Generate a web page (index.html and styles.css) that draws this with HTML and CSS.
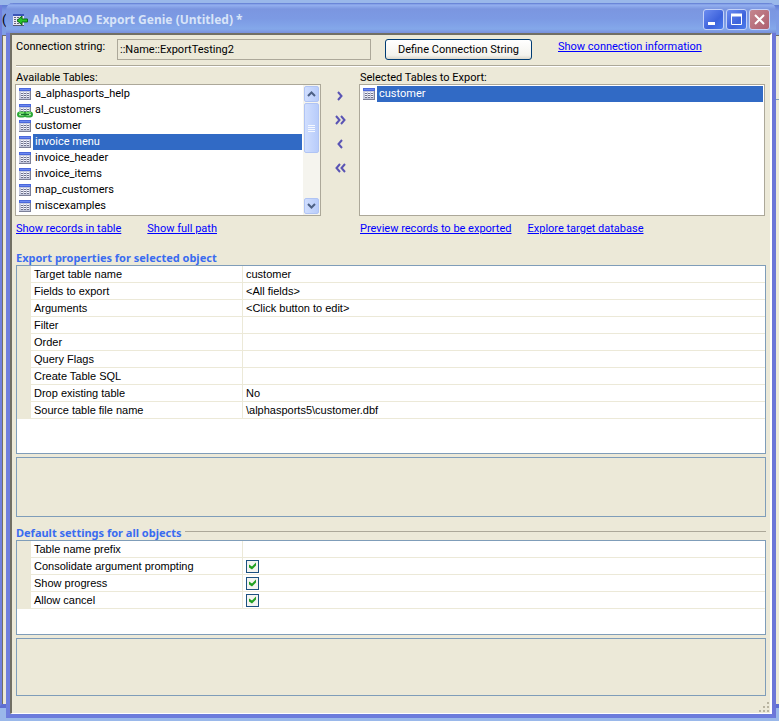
FILE: index.html
```html
<!DOCTYPE html>
<html lang="en">
<head>
  <meta charset="UTF-8">
  <meta name="viewport" content="width=device-width, initial-scale=1.0">
  <title>AlphaDAO Export Genie</title>
  <link rel="stylesheet" href="styles.css">
</head>
<body>

  <!-- shared icons -->
  <svg class="sprite" aria-hidden="true">
    <symbol id="icon-table" viewBox="0 0 12 12">
      <rect width="12" height="12" fill="#7c8098"/>
      <rect width="11" height="11" fill="#c4c8dc"/>
      <rect width="12" height="3" fill="#4a68dc"/>
      <rect x="1" y="1" width="10" height="1" fill="#6c88f0"/>
      <path d="M2 4.500h2M5 4.500h2M8 4.500h2M2 6.500h2M5 6.500h2M8 6.500h2M2 8.500h2M5 8.500h2M8 8.500h2" stroke="#f4f4fc"/>
      <path d="M2 5.500h2M5 5.500h2M8 5.500h2M2 7.500h2M5 7.500h2M8 7.500h2M2 9.500h2M5 9.500h2M8 9.500h2" stroke="#70748c"/>
    </symbol>
    <symbol id="icon-link" viewBox="0 0 16 7">
      <rect x="1" y="1.500" width="7" height="4" rx="2" fill="#b8f0b0" stroke="#2ca838" stroke-width="2"/>
      <rect x="8" y="1.500" width="7" height="4" rx="2" fill="#b8f0b0" stroke="#2ca838" stroke-width="2"/>
      <path d="M2 1.500h5M9 1.500h5" stroke="#6ce060"/>
      <path d="M4 3.500h8" stroke="#14702a"/>
    </symbol>
    <symbol id="icon-chevron" viewBox="0 0 6 10">
      <path d="M1 1l3.500 4L1 9" fill="none" stroke="#5a54b4" stroke-width="2"/>
    </symbol>
  </svg>

  <!-- window behind -->
  <div class="back-window">
    <div class="back-title"><span>(</span></div>
    <div class="back-body"></div>
  </div>

  <main class="window">
    <header class="titlebar">
      <svg class="app-icon" viewBox="0 0 16 14" aria-hidden="true">
        <rect x="1" y="1" width="11" height="11" fill="#e8e8f4"/>
        <rect x="1" y="1" width="11" height="2" fill="#3d55b8"/>
        <path d="M2 4.500h9M2 6.500h9M2 8.500h9M2 10.500h9" stroke="#686880" stroke-dasharray="2 1"/>
        <path d="M1 12.500h11" stroke="#555a70"/>
        <path d="M5 7.500l5-4.500v3h5.500v3h-5.500v3z" fill="#24c424" stroke="#0c6818"/>
      </svg>
      <h1>AlphaDAO Export Genie (Untitled) *</h1>
      <div class="window-buttons">
        <button type="button" aria-label="Minimize">
          <svg viewBox="0 0 19 19"><path d="M4 13.500h7" stroke="#fff" stroke-width="3"/></svg>
        </button>
        <button type="button" aria-label="Maximize">
          <svg viewBox="0 0 19 19"><path d="M4.500 5v9.500h10V5M4 5.500h11" fill="none" stroke="#fff"/><path d="M4 5h11" stroke="#fff" stroke-width="3"/></svg>
        </button>
        <button type="button" class="close" aria-label="Close">
          <svg viewBox="0 0 19 19"><path d="M5 5l9 9M14 5l-9 9" stroke="#fff" stroke-width="2"/></svg>
        </button>
      </div>
    </header>

    <div class="client">
      <div class="connection">
        <label for="connection">Connection string:</label>
        <input type="text" id="connection" value="::Name::ExportTesting2" readonly>
        <button type="button" class="define">Define Connection String</button>
        <a href="#info">Show connection information</a>
      </div>

      <!-- table pickers -->
      <div class="pickers">
        <section>
          <h2 id="available">Available Tables:</h2>
          <div class="list-frame">
            <ul class="list" role="listbox" aria-labelledby="available">
              <li role="option"><svg class="icon"><use href="#icon-table"/></svg><span>a_alphasports_help</span></li>
              <li role="option"><svg class="icon"><use href="#icon-table"/></svg><svg class="link-badge"><use href="#icon-link"/></svg><span>al_customers</span></li>
              <li role="option"><svg class="icon"><use href="#icon-table"/></svg><span>customer</span></li>
              <li role="option" aria-selected="true"><svg class="icon"><use href="#icon-table"/></svg><span>invoice menu</span></li>
              <li role="option"><svg class="icon"><use href="#icon-table"/></svg><span>invoice_header</span></li>
              <li role="option"><svg class="icon"><use href="#icon-table"/></svg><span>invoice_items</span></li>
              <li role="option"><svg class="icon"><use href="#icon-table"/></svg><span>map_customers</span></li>
              <li role="option"><svg class="icon"><use href="#icon-table"/></svg><span>miscexamples</span></li>
            </ul>
            <div class="scrollbar">
              <button type="button" aria-label="Scroll up"><svg viewBox="0 0 9 6"><path d="M1 5l3.500-3.500L8 5" fill="none" stroke="#4d6185" stroke-width="2"/></svg></button>
              <div class="thumb"><i></i><i></i><i></i><i></i></div>
              <button type="button" aria-label="Scroll down"><svg viewBox="0 0 9 6"><path d="M1 1l3.500 3.500L8 1" fill="none" stroke="#4d6185" stroke-width="2"/></svg></button>
            </div>
          </div>
          <p class="links">
            <a href="#records">Show records in table</a>
            <a href="#path">Show full path</a>
          </p>
        </section>

        <div class="movers">
          <button type="button" aria-label="Add"><svg><use href="#icon-chevron"/></svg></button>
          <button type="button" aria-label="Add all"><svg><use href="#icon-chevron"/></svg><svg><use href="#icon-chevron"/></svg></button>
          <button type="button" class="back" aria-label="Remove"><svg><use href="#icon-chevron"/></svg></button>
          <button type="button" class="back" aria-label="Remove all"><svg><use href="#icon-chevron"/></svg><svg><use href="#icon-chevron"/></svg></button>
        </div>

        <section>
          <h2 id="selected">Selected Tables to Export:</h2>
          <div class="list-frame">
            <ul class="list" role="listbox" aria-labelledby="selected">
              <li role="option" aria-selected="true"><svg class="icon"><use href="#icon-table"/></svg><span>customer</span></li>
            </ul>
          </div>
          <p class="links narrow">
            <a href="#preview">Preview records to be exported</a>
            <a href="#explore">Explore target database</a>
          </p>
        </section>
      </div>

      <!-- properties of the selected table -->
      <section class="properties">
        <h3>Export properties for selected object</h3>
        <div class="sheet">
          <table>
            <tr><th scope="row">Target table name</th><td>customer</td></tr>
            <tr><th scope="row">Fields to export</th><td>&lt;All fields&gt;</td></tr>
            <tr><th scope="row">Arguments</th><td>&lt;Click button to edit&gt;</td></tr>
            <tr><th scope="row">Filter</th><td></td></tr>
            <tr><th scope="row">Order</th><td></td></tr>
            <tr><th scope="row">Query Flags</th><td></td></tr>
            <tr><th scope="row">Create Table SQL</th><td></td></tr>
            <tr><th scope="row">Drop existing table</th><td>No</td></tr>
            <tr><th scope="row">Source table file name</th><td>\alphasports5\customer.dbf</td></tr>
          </table>
        </div>
        <div class="help"></div>
      </section>

      <!-- defaults -->
      <section class="defaults">
        <h3>Default settings for all objects</h3>
        <div class="sheet">
          <table>
            <tr><th scope="row">Table name prefix</th><td></td></tr>
            <tr><th scope="row"><label for="consolidate">Consolidate argument prompting</label></th><td><input type="checkbox" id="consolidate" checked></td></tr>
            <tr><th scope="row"><label for="progress">Show progress</label></th><td><input type="checkbox" id="progress" checked></td></tr>
            <tr><th scope="row"><label for="cancel">Allow cancel</label></th><td><input type="checkbox" id="cancel" checked></td></tr>
          </table>
        </div>
        <div class="help"></div>
      </section>

      <svg class="grip" viewBox="0 0 11 11" aria-hidden="true">
        <path d="M8 1h2M4 5h2M8 5h2M0 9h2M4 9h2M8 9h2" stroke="#b8b4a0" stroke-width="2"/>
      </svg>
    </div>
  </main>

</body>
</html>
```
FILE: styles.css
```css
* {
  box-sizing: border-box;
}

body {
  margin: 0;
  padding: 3px 3px 3px 6px;
  min-height: 100vh;
  background-color: #9ab8ea;
  color: #000;
  font-family: Roboto, Tahoma, sans-serif;
  font-size: 11px;
  line-height: 16px;
  position: relative;
  overflow: hidden;
}

button,
input {
  font: inherit;
  margin: 0;
}

h1, h2, h3, p, ul {
  margin: 0;
  padding: 0;
}

a {
  color: #0000ff;
}

.sprite {
  position: absolute;
  width: 0;
  height: 0;
}

/* window behind */
.back-window {
  position: absolute;
  top: 5px;
  bottom: 13px;
  left: -2px;
  right: -8px;
  border: 4px solid #7080dc;
  border-top: 0;
  border-bottom-color: #5f6ed2;
}

.back-title {
  height: 31px;
  background: linear-gradient(#5f7cd4, #7c98e4 6px, #7f9fe6);
  border-bottom: 1px solid #6a6a6a;
  line-height: 30px;
  font-size: 13px;
}

.back-body {
  height: calc(100% - 31px);
  background: #ece9d8 linear-gradient(#7f9db9, #7f9db9) right 63px / 50% 1px no-repeat;
  border-left: 1px solid #716f64;
}

/* main window */
.window {
  position: relative;
  border: 4px solid #6f7fdd;
  border-top: 0;
  border-right-color: #6c76d8;
  border-bottom-color: #6c7cdc;
  border-radius: 7px 7px 0 0;
  background-color: #ece9d8;
}

.titlebar {
  display: flex;
  align-items: center;
  height: 30px;
  margin: 0 -4px;
  padding: 3px 6px 0;
  border-radius: 7px 7px 0 0;
  background: linear-gradient(#5c78d0, #94b0f0 2px, #7b96e0 6px, #7c9ae4 16px, #84a8ea 26px, #7890dc);
}

.app-icon {
  width: 16px;
  height: 14px;
  margin-right: 4px;
}

.titlebar h1 {
  flex: 1;
  font-family: "Noto Sans", sans-serif;
  font-size: 12px;
  font-weight: bold;
  color: #d8e4f8;
}

.window-buttons {
  display: flex;
  gap: 2px;
}

.window-buttons button {
  width: 21px;
  height: 21px;
  padding: 0;
  border: 1px solid #c4d2f8;
  border-radius: 3px;
  background: linear-gradient(135deg, #6c8cf0, #3e63dc 60%, #4a7cec);
}

.window-buttons .close {
  background: linear-gradient(135deg, #c4868e, #ae5f70);
}

.window-buttons svg {
  display: block;
  width: 19px;
  height: 19px;
}

.client {
  position: relative;
  padding: 4px 4px 17px 4px;
  border: solid #716f64;
  border-width: 2px 0 0 2px;
  border-right: 2px solid #fff;
  border-bottom: 1px solid #fff;
}

/* connection row */
.connection {
  display: flex;
  align-items: flex-start;
  margin-right: -4px;
  padding-bottom: 5px;
  border-bottom: 1px solid #aca899;
  box-shadow: 0 1px #fff;
}

.connection label {
  width: 101px;
}

.connection input {
  width: 254px;
  height: 21px;
  padding: 0 2px;
  border: 1px solid #aca899;
  background-color: #ece9d8;
  outline: none;
}

.define {
  width: 147px;
  height: 21px;
  margin: 0 26px 0 14px;
  padding: 0;
  border: 1px solid #003c74;
  border-radius: 3px;
  background: linear-gradient(#fff, #f4f3ee 80%, #dcd8cc);
}

/* table pickers */
.pickers {
  display: grid;
  grid-template-columns: 306px 38px 1fr;
  margin: 6px 1px 0 -1px;
}

.pickers h2 {
  padding-left: 1px;
  font-size: 11px;
  line-height: 12px;
  font-weight: normal;
}

.list-frame {
  display: flex;
  height: 132px;
  border: 1px solid #aca899;
  background-color: #fff;
}

.list {
  flex: 1;
  list-style: none;
  padding: 1px 1px 1px 3px;
}

.list li {
  display: flex;
  align-items: center;
  gap: 2px;
  height: 16px;
  position: relative;
}

.list span {
  flex: 1;
  height: 16px;
  padding-left: 2px;
  line-height: 15px;
}

.list li[aria-selected="true"] span {
  background-color: #316ac5;
  color: #fff;
}

.icon {
  width: 12px;
  height: 12px;
}

.link-badge {
  position: absolute;
  left: -2px;
  bottom: 0;
  width: 16px;
  height: 7px;
}

.scrollbar {
  display: flex;
  flex-direction: column;
  width: 17px;
  padding: 1px;
  background-color: #f5f4ee;
}

.scrollbar button,
.thumb {
  flex: none;
  width: 15px;
  padding: 0;
  border: 1px solid #b0c4f4;
  border-radius: 2px;
  background: linear-gradient(90deg, #d0defe, #b8ccfa);
}

.scrollbar button {
  height: 16px;
}

.scrollbar button:last-child {
  margin-top: auto;
}

.scrollbar svg {
  display: block;
  width: 9px;
  height: 6px;
  margin: 0 auto;
}

.thumb {
  display: flex;
  flex-direction: column;
  align-items: center;
  justify-content: center;
  gap: 1px;
  height: 50px;
  margin-top: 1px;
}

.thumb i {
  width: 7px;
  height: 1px;
  background-color: #f4f8ff;
}

.movers {
  display: flex;
  flex-direction: column;
  align-items: center;
  padding-top: 12px;
}

.movers button {
  display: flex;
  align-items: center;
  justify-content: center;
  width: 24px;
  height: 24px;
  padding: 0;
  border: 0;
  background: none;
}

.movers svg {
  width: 6px;
  height: 10px;
}

.movers svg + svg {
  margin-left: -1px;
}

.back svg {
  transform: scaleX(-1);
}

.links {
  display: flex;
  gap: 26px;
  margin: 5px 0 0 1px;
}

.narrow {
  gap: 16px;
}

/* property sheets */
.properties {
  margin-top: 14px;
}

.defaults {
  margin-top: 9px;
}

.properties h3,
.defaults h3 {
  display: flex;
  align-items: center;
  gap: 3px;
  font-family: "Noto Sans", Verdana, sans-serif;
  font-size: 11px;
  line-height: 14px;
  font-weight: bold;
  color: #3a6cf0;
}

.defaults h3::after {
  content: "";
  flex: 1;
  height: 3px;
  border-top: 1px solid #aca899;
}

.sheet {
  min-height: 189px;
  border: 1px solid #7f9db9;
  background-color: #fff;
}

.defaults .sheet {
  min-height: 95px;
}

.sheet table {
  width: 100%;
  border-collapse: separate;
  border-spacing: 0;
  table-layout: fixed;
  font-family: "Liberation Sans", Arial, sans-serif;
}

.sheet th,
.sheet td {
  height: 17px;
  padding: 0 3px;
  border-bottom: 1px solid #ece9d8;
  line-height: 16px;
  text-align: left;
  font-weight: normal;
}

.sheet th {
  width: 226px;
  border-left: 14px solid #ece9d8;
  border-right: 1px solid #ece9d8;
}

.sheet input {
  appearance: none;
  display: block;
  width: 13px;
  height: 13px;
  border: 1px solid #1c5180;
  background: #f4f4f0;
}

.sheet input:checked::before {
  content: "";
  display: block;
  width: 11px;
  height: 11px;
  background-color: #21a121;
  clip-path: polygon(2px 4px, 5px 6px, 9px 2px, 9px 5px, 5px 9px, 2px 7px);
}

.help {
  height: 60px;
  margin-top: 3px;
  border: 1px solid #7f9db9;
}

.defaults .help {
  height: 58px;
}

.grip {
  position: absolute;
  right: 0;
  bottom: 0;
  width: 11px;
  height: 11px;
}
```
